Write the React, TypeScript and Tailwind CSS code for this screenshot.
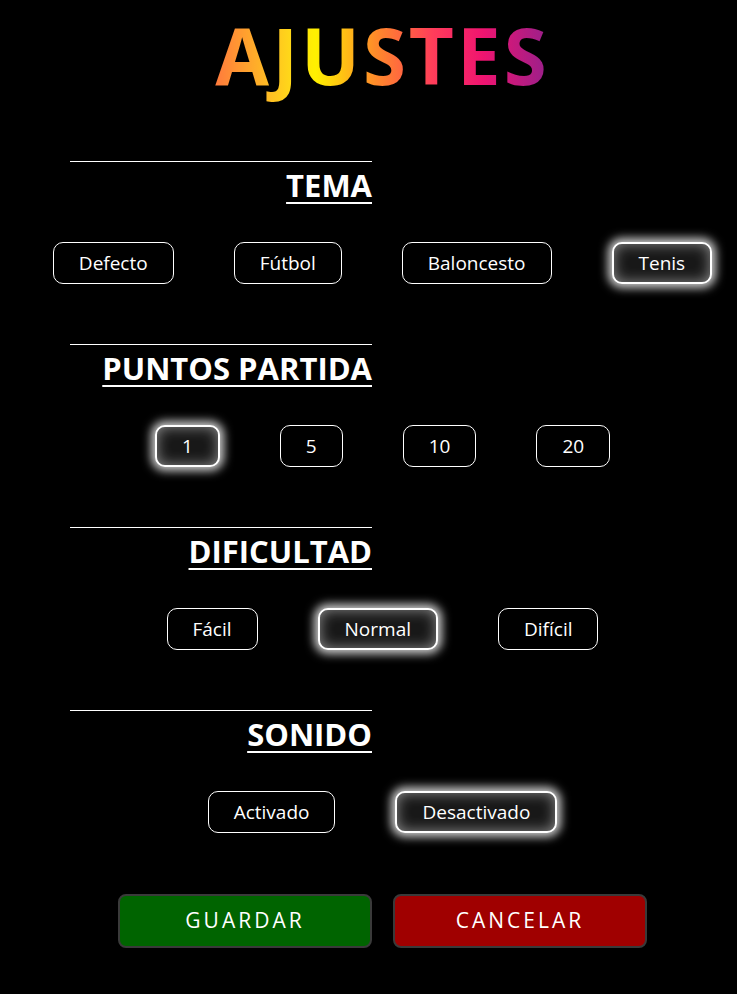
import React from 'react';

type Opt = { label: string; active?: boolean };

const sections: { title: string; options: Opt[] }[] = [
    {
        title: 'TEMA',
        options: [{ label: 'Defecto' }, { label: 'Fútbol' }, { label: 'Baloncesto' }, { label: 'Tenis', active: true }],
    },
    {
        title: 'PUNTOS PARTIDA',
        options: [{ label: '1', active: true }, { label: '5' }, { label: '10' }, { label: '20' }],
    },
    {
        title: 'DIFICULTAD',
        options: [{ label: 'Fácil' }, { label: 'Normal', active: true }, { label: 'Difícil' }],
    },
    {
        title: 'SONIDO',
        options: [{ label: 'Activado' }, { label: 'Desactivado', active: true }],
    },
];

const OptionButton: React.FC<Opt> = ({ label, active }) => (
    <button
        className={
            'h-[42px] px-[25px] rounded-[10px] text-[19px] text-white leading-none ' +
            (active
                ? 'border-2 border-white bg-[#181818] shadow-[0_0_10px_4px_rgba(255,255,255,0.8),inset_0_0_14px_rgba(255,255,255,0.5)]'
                : 'border border-white bg-black')
        }
    >
        {label}
    </button>
);

export default function App() {
    return (
        <div className="min-h-screen bg-black text-white font-['Segoe_UI','Open_Sans',sans-serif] pl-[28px] pb-[48px]">
            {/* title */}
            <h1 className="text-center text-[78px] font-bold leading-none tracking-[3px] pt-[16px]">
                <span className="bg-[linear-gradient(to_right,#ff7a3d_0%,#ffd61a_22%,#fff000_30%,#ff8a2a_48%,#ff3d5a_65%,#ef1470_80%,#96208c_100%)] bg-clip-text text-transparent">
                    AJUSTES
                </span>
            </h1>

            <div className="mt-[67px] flex flex-col gap-[60px]">
                {sections.map((s) => (
                    <section key={s.title}>
                        <div className="w-[302px] ml-[42px]">
                            <div className="h-px bg-white" />
                            <h2 className="text-right text-[31px] font-bold underline underline-offset-[5px] decoration-[2px] leading-[40px] mt-[3px]">
                                {s.title}
                            </h2>
                        </div>
                        <div className="mt-[37px] flex justify-center gap-[60px]">
                            {s.options.map((o) => (
                                <OptionButton key={o.label} {...o} />
                            ))}
                        </div>
                    </section>
                ))}
            </div>

            {/* 🎯 actions */}
            <div className="mt-[61px] flex justify-center gap-[21px]">
                <button className="w-[254px] h-[54px] rounded-[8px] border-2 border-[#3a3a3a] bg-[#006400] text-[21px] tracking-[3px] text-white">
                    GUARDAR
                </button>
                <button className="w-[254px] h-[54px] rounded-[8px] border-2 border-[#3a3a3a] bg-[#a00000] text-[21px] tracking-[3px] text-white">
                    CANCELAR
                </button>
            </div>
        </div>
    );
}
